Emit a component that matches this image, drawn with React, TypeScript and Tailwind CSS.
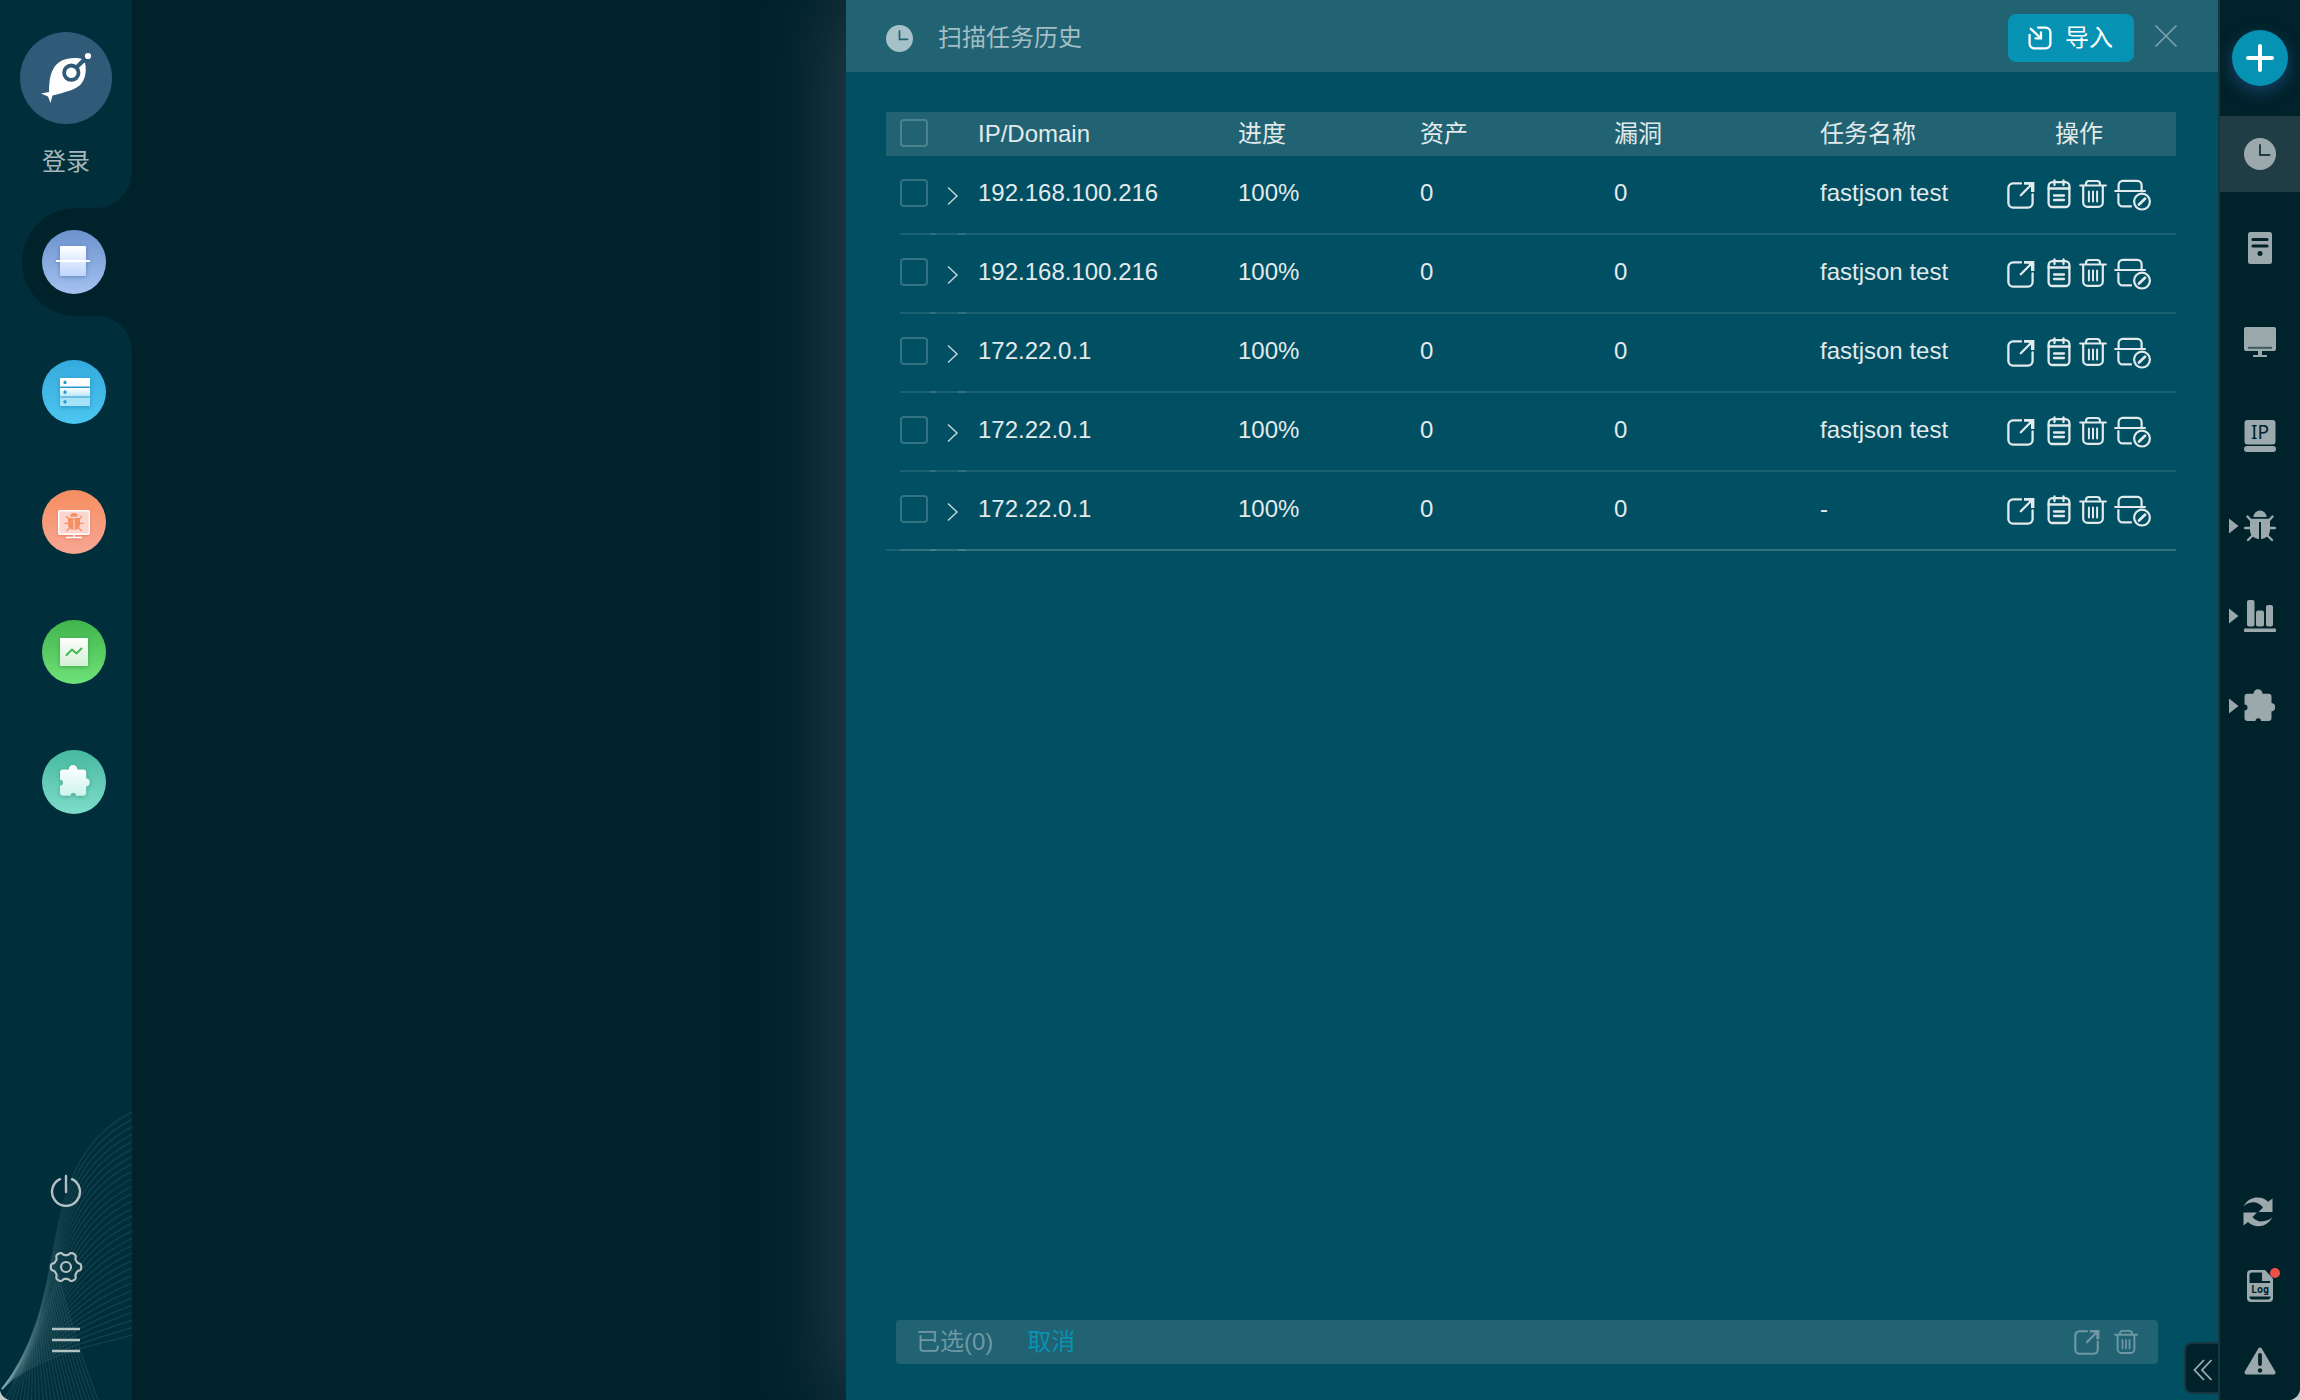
import React from "react";

const rows = [
  { ip: "192.168.100.216", name: "fastjson test" },
  { ip: "192.168.100.216", name: "fastjson test" },
  { ip: "172.22.0.1", name: "fastjson test" },
  { ip: "172.22.0.1", name: "fastjson test" },
  { ip: "172.22.0.1", name: "-" },
];

const GRID = "grid grid-cols-[14px_78px_260px_182px_194px_206px_356px]";

function ExportIcon({ className = "" }: { className?: string }) {
  return (
    <svg viewBox="0 0 28 28" className={className} fill="none" stroke="currentColor" strokeWidth="2.3">
      <path d="M14 2.4H6A4.6 4.6 0 0 0 1.4 7V22A4.6 4.6 0 0 0 6 26.600H21A4.600 4.600 0 0 0 25.6 22V13.500" strokeLinecap="round" />
      <path d="M13.800 14.200L24 4" strokeLinecap="round" />
      <path d="M17 1H27.400V11H24V6.200L21.500 3.800H17Z" fill="currentColor" stroke="none" />
    </svg>
  );
}

function NoteIcon({ className = "" }: { className?: string }) {
  return (
    <svg viewBox="0 0 24 30" className={className} fill="none" stroke="currentColor" strokeWidth="2.300">
      <rect x="1.600" y="3.200" width="20.800" height="24.800" rx="4" />
      <path d="M1.600 9.500H22.400M7.500 1.500V6M16.500 1.500V6M7 16.500H17M7 21H17" strokeLinecap="round" />
    </svg>
  );
}

function TrashIcon({ className = "" }: { className?: string }) {
  return (
    <svg viewBox="0 0 28 30" className={className} fill="none" stroke="currentColor" strokeWidth="2.200">
      <path d="M1.200 6.500H26.800M7 6V5A3 3 0 0 1 10 2H18A3 3 0 0 1 21 5V6M4.200 6.500V23.400A4.400 4.400 0 0 0 8.600 27.800H19.400A4.400 4.400 0 0 0 23.800 23.400V6.500" strokeLinecap="round" />
      <path d="M9.900 12.500V22.500M14 12.500V22.500M18.100 12.500V22.500" strokeWidth="2" strokeLinecap="round" />
    </svg>
  );
}

function ScanOffIcon({ className = "" }: { className?: string }) {
  return (
    <svg viewBox="0 0 38 32" className={className} fill="none" stroke="currentColor" strokeWidth="2.200">
      <path d="M1.200 12H31M4.600 11.500V6A4.200 4.200 0 0 1 8.800 1.800H23.400A4.200 4.200 0 0 1 27.600 6V11.500M4.400 15V23.200A4.200 4.200 0 0 0 8.600 27.400H17" strokeLinecap="round" />
      <circle cx="28" cy="22.600" r="7.900" />
      <path d="M25 25.600L31 19.800" strokeWidth="2.800" strokeLinecap="round" />
    </svg>
  );
}

function ClockIcon({ className = "", hand }: { className?: string; hand: string }) {
  return (
    <svg viewBox="0 0 32 32" className={className}>
      <circle cx="16" cy="16" r="16" fill="currentColor" />
      <path d="M16 7V17H25.500" fill="none" stroke={hand} strokeWidth="2" strokeLinecap="round" />
    </svg>
  );
}

const PUZZLE =
  "M3.500 3.800H9.500A4.300 4.300 0 0 1 18.500 3.800H24.500A3 3 0 0 1 27.500 6.800V13A4.300 4.300 0 0 1 27.500 21.500V28A3 3 0 0 1 24.500 31H17A2.700 2.700 0 0 0 11.500 31H3.500A3 3 0 0 1 .5 28V20.500A2.700 2.700 0 0 0 .5 14.500V6.800A3 3 0 0 1 3.500 3.800Z";

function BugShape() {
  return (
    <>
      <path d="M9.500 7A6.500 6.500 0 0 1 22.500 7Z" fill="currentColor" />
      <path d="M6 8.800H15V29C9.500 28.400 6 25 6 20ZM17 8.800H26V20C26 25 22.500 28.400 17 29Z" fill="currentColor" />
      <path d="M15 8.800H17V12H15Z" fill="currentColor" />
      <path d="M3.500 6.500L7 10.500M28.500 6.500L25 10.500M1 18H6.500M31 18H25.500M4 30L8.500 25.500M28 30L23.500 25.500" fill="none" stroke="currentColor" strokeWidth="2.400" strokeLinecap="round" />
    </>
  );
}

function Checkbox() {
  return <span className="block h-7 w-7 rounded-[4px] border-2 border-white/20" />;
}

function NavGlyph({ kind }: { kind: string }) {
  if (kind === "scan")
    return (
      <svg viewBox="0 0 64 64" className="h-16 w-16 drop-shadow-[0_1px_2px_rgba(40,70,140,0.450)]">
        <defs>
          <linearGradient id="g1" x1="0" y1="0" x2="0" y2="1">
            <stop offset="0" stopColor="#fff" />
            <stop offset="1" stopColor="#bfd5fc" />
          </linearGradient>
        </defs>
        <rect x="18" y="16" width="26" height="30" rx="1" fill="url(#g1)" />
        <rect x="14" y="30" width="34" height="2" fill="#fff" />
      </svg>
    );
  if (kind === "server")
    return (
      <svg viewBox="0 0 64 64" className="h-16 w-16 drop-shadow-[0_1px_2px_rgba(0,80,140,0.400)]">
        <defs>
          <linearGradient id="g2" x1="0" y1="0" x2="0" y2="1">
            <stop offset="0" stopColor="#fff" />
            <stop offset="1" stopColor="#b8e6f7" />
          </linearGradient>
        </defs>
        <rect x="18" y="18" width="30" height="8.500" fill="#fff" />
        <rect x="18" y="28" width="30" height="8.500" fill="url(#g2)" />
        <rect x="18" y="37.500" width="30" height="8.500" fill="#a6e3f8" />
        <path d="M23 20.800V24M21.400 22.400H24.600M23 30.600V33.800M21.400 32.200H24.600M23 40.200V43.400M21.400 41.800H24.600" stroke="#2b9bd6" strokeWidth="2" />
      </svg>
    );
  if (kind === "vuln")
    return (
      <svg viewBox="0 0 64 64" className="h-16 w-16 drop-shadow-[0_1px_1px_rgba(200,60,40,0.350)]">
        <rect x="16.700" y="20.700" width="30.600" height="23.600" rx="1" fill="#fdd5cf" stroke="#fff" strokeWidth="1.400" />
        <path d="M32 44.500V47M24 47.500H40" stroke="#fff" strokeWidth="1.400" />
        <g transform="translate(22.400 22.600) scale(0.600)" className="text-[#f68f64]">
          <BugShape />
        </g>
      </svg>
    );
  if (kind === "report")
    return (
      <svg viewBox="0 0 64 64" className="h-16 w-16 drop-shadow-[0_1px_2px_rgba(10,100,30,0.400)]">
        <defs>
          <linearGradient id="g4" x1="0" y1="0" x2="0" y2="1">
            <stop offset="0" stopColor="#fff" />
            <stop offset="1" stopColor="#d2efd4" />
          </linearGradient>
        </defs>
        <rect x="18" y="18" width="28" height="28" rx="0.500" fill="url(#g4)" />
        <path d="M24.500 35L30 29.500L34.500 33.500L39.500 28.500" fill="none" stroke="#43b852" strokeWidth="2" strokeLinecap="round" />
      </svg>
    );
  return (
    <svg viewBox="0 0 64 64" className="h-16 w-16 drop-shadow-[0_1px_2px_rgba(10,100,80,0.400)]">
      <defs>
        <linearGradient id="g5" x1="0" y1="0" x2="0" y2="1">
          <stop offset="0" stopColor="#fff" />
          <stop offset="1" stopColor="#cdf3ea" />
        </linearGradient>
      </defs>
      <path d={PUZZLE} transform="translate(17.500 15.700) scale(0.970)" fill="url(#g5)" />
    </svg>
  );
}

const nav = [
  { kind: "scan", bg: "bg-linear-to-b from-[#6c92cd] to-[#a5c2f0]" },
  { kind: "server", bg: "bg-linear-to-b from-[#35aadd] to-[#4cc6f0]" },
  { kind: "vuln", bg: "bg-linear-to-b from-[#f68e5f] to-[#f7a693]" },
  { kind: "report", bg: "bg-linear-to-b from-[#40b54c] to-[#70e27a]" },
  { kind: "plugin", bg: "bg-linear-to-b from-[#45b9a0] to-[#7edccb]" },
];

function Waves() {
  const lerp = (a: number, b: number, t: number) => a + (b - a) * t;
  const fan: string[] = [];
  for (let i = 0; i <= 30; i++) {
    const t = i / 30;
    fan.push(
      `M132 ${lerp(12, 235, t)}C${lerp(28, 96, t)} ${lerp(66, 246, t)} ${lerp(78, 40, t)} ${lerp(190, 252, t)} 2 289`
    );
  }
  const rays: string[] = [];
  for (let i = 0; i <= 24; i++) {
    const t = i / 24;
    rays.push(`M${lerp(4, 98, t)} 300Q${lerp(14, 78, t)} ${lerp(284, 250, t)} ${lerp(22, 58, t)} ${lerp(266, 175, t)}`);
  }
  return (
    <svg viewBox="0 0 132 300" className="absolute bottom-0 left-0 h-[300px] w-[132px]" fill="none">
      {fan.map((d, i) => (
        <path key={i} d={d} stroke="#8fb4bb" strokeOpacity="0.120" strokeWidth="1.500" />
      ))}
      {rays.map((d, i) => (
        <path key={i} d={d} stroke="#8fb4bb" strokeOpacity="0.120" strokeWidth="1.500" />
      ))}
    </svg>
  );
}

const GEAR = Array.from({ length: 120 }, (_, i) => {
  const a = (i / 120) * Math.PI * 2;
  const r = 13.6 + 1.7 * Math.tanh(2 * Math.cos(6 * a));
  return `${(17 + r * Math.cos(a)).toFixed(2)},${(16 + r * Math.sin(a)).toFixed(2)}`;
}).join(" ");

function Sidebar() {
  return (
    <aside className="relative flex w-[132px] shrink-0 flex-col items-center bg-[#002f3b]">
      <Waves />
      <div className="mt-8 flex h-[92px] w-[92px] items-center justify-center rounded-full bg-[#2f5b79]">
        <svg viewBox="0 0 92 92" className="h-[92px] w-[92px]">
          <path d="M29 60C29 42 33 33 42 28.500C47 26 56 25 62 27L56 33L65 30.500C67 40 65 49 59 54C53 58.500 44 60.500 32.500 63.500L30.500 71L28 64.500L21 61.500Z" fill="#fff" />
          <path d="M51.500 40.500L64 28.500" stroke="#2f5b79" strokeWidth="3.400" />
          <circle cx="51.300" cy="40.700" r="7.200" fill="#fff" stroke="#2f5b79" strokeWidth="3.800" />
          <path d="M56.500 35.500L67 25" stroke="#2f5b79" strokeWidth="3.200" />
          <circle cx="68" cy="24" r="3.100" fill="#fff" />
        </svg>
      </div>
      <div className="mt-[20px] text-[24px] leading-9 text-[#a6b6ba]">登录</div>
      <nav className="mt-[50px] flex flex-col gap-[66px] pl-4">
        {nav.map((n, i) => (
          <div key={n.kind} className="relative">
            {i === 0 && (
              <svg viewBox="0 0 112 184" className="absolute -top-[60px] -left-[20px] h-[184px] w-[112px]">
                <path d="M110 0V184C110 160 94 146 74 146H54A54 54 0 0 1 54 38H74C94 38 110 22 110 0Z" fill="#00222b" />
              </svg>
            )}
            <div className={"relative h-16 w-16 rounded-full " + n.bg}>
              <NavGlyph kind={n.kind} />
            </div>
          </div>
        ))}
      </nav>
      <div className="relative mt-auto mb-[47px] flex flex-col items-center text-[#b3c1c3]">
        <svg viewBox="0 0 32 34" className="h-[34px] w-8" fill="none" stroke="currentColor" strokeWidth="2.400" strokeLinecap="round">
          <path d="M16 3V19M10 6.200A14 14 0 1 0 22 6.200" />
        </svg>
        <svg viewBox="0 0 34 32" className="mt-[44px] h-8 w-[34px]" fill="none" stroke="currentColor" strokeWidth="2.200" strokeLinejoin="round">
          <polygon points={GEAR} />
          <circle cx="17" cy="16" r="5" />
        </svg>
        <svg viewBox="0 0 28 26" className="mt-[44px] h-[26px] w-7" stroke="currentColor" strokeWidth="2.400">
          <path d="M0 2H28M0 13H28M0 24H28" />
        </svg>
      </div>
    </aside>
  );
}

function Panel() {
  return (
    <section className="relative flex w-[1372px] shrink-0 flex-col bg-[#004f62] shadow-[0_0_84px_rgba(83,94,110,0.600)]">
      <header className="flex h-[72px] items-center bg-[#216373] pr-[40px] pl-[40px]">
        <ClockIcon className="mt-1 h-[27px] w-[27px] text-[#a7c1c8]" hand="#216373" />
        <h1 className="mt-1 ml-[25px] text-[24px] leading-9 text-[#a3bec5]">扫描任务历史</h1>
        <button className="mt-1 ml-auto flex h-12 w-[126px] items-center rounded-lg bg-[#0592b3] pl-5 text-[24px] text-white">
          <svg viewBox="0 0 24 24" className="h-6 w-6" fill="none" stroke="currentColor" strokeWidth="2.300" strokeLinecap="round">
            <path d="M10 1.600H17.800A4.600 4.600 0 0 1 22.400 6.200V17.800A4.600 4.600 0 0 1 17.800 22.400H6.200A4.600 4.600 0 0 1 1.600 17.800V9" />
            <path d="M2.800 2.800L12 11.500" />
            <path d="M13 6.500V12.300H7.500" />
          </svg>
          <span className="ml-[13px]">导入</span>
        </button>
        <svg viewBox="0 0 24 24" className="ml-5 h-6 w-6" stroke="#7ea3ad" strokeWidth="1.600">
          <path d="M1.500 1.500L22.500 22.500M22.500 1.500L1.500 22.500" />
        </svg>
      </header>

      <div className="mt-10 ml-10 w-[1290px] text-[24px] text-[#e2eaec]">
        <div className={GRID + " h-11 items-center bg-[#216373]"}>
          <span />
          <span className="pb-[2px]">
            <Checkbox />
          </span>
          <span>IP/Domain</span>
          <span>进度</span>
          <span>资产</span>
          <span>漏洞</span>
          <span className="flex justify-between pr-[73px]">
            <span>任务名称</span>
            <span>操作</span>
          </span>
        </div>
        {rows.map((r, i) => {
          const last = i === rows.length - 1;
          return (
            <div key={i} className="h-[79px]">
              <div className={GRID + " mb-[3px] h-[74px] items-center"}>
                <span />
                <span className="flex h-full items-center">
                  <Checkbox />
                  <svg viewBox="0 0 12 20" className="mt-1.5 ml-[19px] h-5 w-3" fill="none" stroke="#c3d3d7" strokeWidth="1.500">
                    <path d="M1 1.500L10 10L1 18.500" />
                  </svg>
                </span>
                <span>{r.ip}</span>
                <span>100%</span>
                <span>0</span>
                <span>0</span>
                <span className="flex items-center">
                  <span className="w-[187px]">{r.name}</span>
                  <span className="mt-[2px] flex items-center">
                    <ExportIcon className="mt-[2px] h-7 w-7" />
                    <NoteIcon className="ml-[12px] h-[30px] w-6" />
                    <TrashIcon className="ml-[8px] h-[30px] w-7" />
                    <ScanOffIcon className="mt-[2px] ml-[7px] h-8 w-[38px]" />
                  </span>
                </span>
              </div>
              <div className="flex h-[2px]">
                <span className={last ? "w-[14px] bg-white/10" : "w-[14px]"} />
                <span className={last ? "w-[30px] bg-white/19" : "w-[30px] bg-white/10"} />
                <span className={last ? "w-[6px] bg-white/27" : "w-[6px] bg-white/19"} />
                <span className={last ? "w-[22px] bg-white/19" : "w-[22px] bg-white/10"} />
                <span className={last ? "w-[8px] bg-white/27" : "w-[8px] bg-white/19"} />
                <span className={last ? "flex-1 bg-white/19" : "flex-1 bg-white/10"} />
              </div>
            </div>
          );
        })}
      </div>

      <footer className="mt-auto mr-[60px] mb-9 ml-[50px] flex h-11 items-center rounded-[4px] bg-[#216373] px-5 text-[24px] text-[#6f98a3]">
        <span>已选(0)</span>
        <span className="ml-[34px] text-[#0b91b2]">取消</span>
        <ExportIcon className="ml-auto h-[26px] w-[26px]" />
        <TrashIcon className="ml-[14px] h-[26px] w-6" />
      </footer>

      <button className="absolute right-0 bottom-[6px] flex h-[52px] w-[34px] items-center rounded-l-lg border-2 border-r-0 border-[#173841] bg-[#00222b] pl-[7px]">
        <svg viewBox="0 0 20 22" className="mt-[4px] h-[22px] w-5" fill="none" stroke="#a0adb0" strokeWidth="1.800">
          <path d="M11 1L1.500 11L11 21M18.500 1L9 11L18.500 21" />
        </svg>
      </button>
    </section>
  );
}

function Caret() {
  return (
    <svg viewBox="0 0 10 16" className="absolute top-1/2 left-[9px] h-4 w-[10px] -translate-y-1/2 text-[#9ba8ac]">
      <path d="M0 0.500L9.500 8L0 15.500Z" fill="currentColor" />
    </svg>
  );
}

function RightBar() {
  return (
    <aside className="relative z-10 flex w-[82px] shrink-0 flex-col items-center border-l-2 border-[#173740] bg-[#00222b] text-[#9ba8ac]">
      <button className="mt-[30px] flex h-14 w-14 shrink-0 items-center justify-center rounded-full bg-[#0592b3] shadow-[0_6px_16px_rgba(40,90,150,0.550)]">
        <svg viewBox="0 0 28 28" className="h-7 w-7" stroke="#fff" strokeWidth="4" strokeLinecap="round">
          <path d="M14 2V26M2 14H26" />
        </svg>
      </button>
      <div className="mt-[30px] flex h-[76px] w-full shrink-0 items-center justify-center bg-[#203c44]">
        <ClockIcon className="h-8 w-8" hand="#203c44" />
      </div>
      <svg viewBox="0 0 24 32" className="mt-[40px] h-8 w-6">
        <rect width="24" height="32" rx="2.500" fill="currentColor" />
        <path d="M5 7.500H19M5 14H19" stroke="#00222b" strokeWidth="3.200" strokeLinecap="round" />
        <circle cx="12" cy="21.500" r="2.500" fill="#00222b" />
      </svg>
      <svg viewBox="0 0 32 30" className="mt-[63px] h-[30px] w-8">
        <rect width="32" height="24" rx="2" fill="currentColor" />
        <path d="M4 20.800H28" stroke="#415b62" strokeWidth="2" />
        <path d="M14 24H18V28H23V30H9V28H14Z" fill="currentColor" />
      </svg>
      <svg viewBox="0 0 32 32" className="mt-[63px] h-8 w-8 overflow-visible">
        <rect x="0.500" width="31" height="24.500" rx="3" fill="currentColor" />
        <rect y="26" width="32" height="6" rx="3" fill="currentColor" />
        <text x="16" y="19" textAnchor="middle" fontSize="19" fill="#00222b" className="font-['Noto_Sans',sans-serif]">
          IP
        </text>
      </svg>
      <div className="relative mt-[58px] flex w-full justify-center">
        <Caret />
        <svg viewBox="0 0 32 32" className="h-8 w-8">
          <BugShape />
        </svg>
      </div>
      <div className="relative mt-[58px] flex w-full justify-center">
        <Caret />
        <svg viewBox="0 0 32 32" className="h-8 w-8" fill="currentColor">
          <rect x="3" width="7.500" height="26.500" rx="2" />
          <rect x="12" y="10.500" width="8" height="16" rx="2" />
          <rect x="22" y="5" width="7" height="21.500" rx="2" />
          <rect y="28.500" width="32" height="3.500" rx="1" />
        </svg>
      </div>
      <div className="relative mt-[58px] flex w-full justify-center">
        <Caret />
        <svg viewBox="0 0 32 32" className="h-8 w-8 overflow-visible">
          <path d={PUZZLE} fill="currentColor" />
        </svg>
      </div>

      <svg viewBox="0 0 30 30" className="mt-auto mr-[4px] h-[30px] w-[30px]" fill="currentColor">
        <path d="M0.500 9.500C4 3 9 0.500 14.500 0.500C19 0.500 22.500 2 25 4.800L29.500 1.500V15H15.500L20 10.500C17.500 7 13.500 5 9.500 5.300C6 5.700 3 7 0.500 9.500Z" />
        <path d="M29.500 20C26 26.500 21 29.200 15.500 29.200C11 29.200 7.500 27.700 5 25L0.500 28.500V15.500H14L9.500 20C12 23.500 16 24.800 20 24.300C23.500 24 27 22.500 29.500 20Z" />
      </svg>
      <div className="relative mt-[43px]">
        <svg viewBox="0 0 26 32" className="block h-8 w-[26px]">
          <path d="M4 0H18L26 8.500V28A4 4 0 0 1 22 32H4A4 4 0 0 1 0 28V4A4 4 0 0 1 4 0Z" fill="currentColor" />
          <path d="M5 2.500H15V11H23V13H2.500V5A2.500 2.500 0 0 1 5 2.500ZM2.500 26.500H23.500A3 3 0 0 1 20.500 29.500H5.500A3 3 0 0 1 2.500 26.500Z" fill="#00222b" />
          <text x="13" y="22.500" textAnchor="middle" fontSize="10" fontWeight="700" fill="#00222b" className="font-['DejaVu_Sans_Mono',monospace]">
            Log
          </text>
        </svg>
        <span className="absolute -top-[2px] -right-[7px] h-[10px] w-[10px] rounded-full bg-[#ef5046]" />
      </div>
      <svg viewBox="0 0 32 28" className="mt-[45px] mb-[25px] h-7 w-8">
        <path d="M16 2.500L29.500 25.500H2.500Z" fill="currentColor" stroke="currentColor" strokeWidth="4" strokeLinejoin="round" />
        <path d="M16 8V17" stroke="#00222b" strokeWidth="3.800" strokeLinecap="round" />
        <circle cx="16" cy="23.500" r="2.200" fill="#00222b" />
      </svg>
    </aside>
  );
}

export default function App() {
  return (
    <div className="h-[1400px] w-[2300px] bg-[#c4cacc]">
      <div className="flex h-full w-full overflow-hidden rounded-b-[12px] bg-[#00222b] font-['Liberation_Sans','Noto_Sans_CJK_SC',sans-serif]">
        <Sidebar />
        <main className="flex-1" />
        <Panel />
        <RightBar />
      </div>
    </div>
  );
}
